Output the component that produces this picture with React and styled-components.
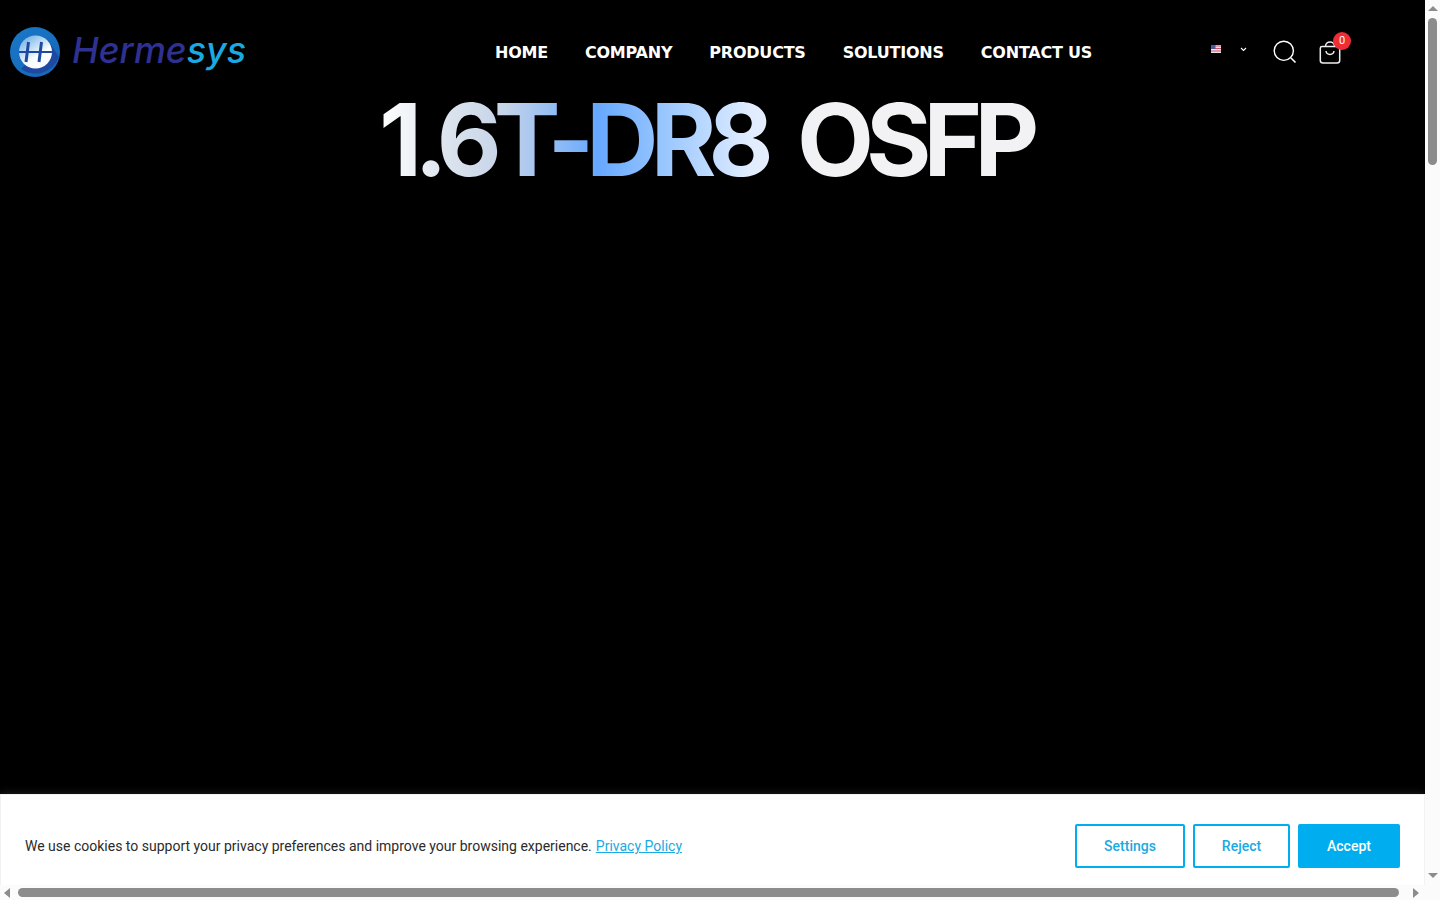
import React from 'react';
import styled, { createGlobalStyle } from 'styled-components';

const GlobalStyle = createGlobalStyle`
  html, body {
    margin: 0;
    height: 100%;
    overflow: hidden;
    background-color: #000;
    font-family: "DejaVu Sans", sans-serif;
  }
`;

const Shell = styled.div`
  display: grid;
  grid-template-columns: 1425px 15px;
  grid-template-rows: 885px 15px;
  width: 1440px;
  height: 900px;
  background-color: #fbfbfb;
`;

const Main = styled.main`
  position: relative;
  overflow: hidden;
  background-color: #000;
`;

const Header = styled.header`
  display: flex;
  align-items: center;
  height: 104px;
  padding: 0 84px 0 10px;
  box-sizing: border-box;
`;

const Logo = styled.a`
  display: flex;
  align-items: center;
  gap: 12px;
  width: 238px;
  flex-shrink: 0;
`;

const Nav = styled.nav`
  display: flex;
  gap: 37px;
  margin-left: 247px;
`;

const NavLink = styled.a`
  font-size: 16px;
  font-weight: 700;
  letter-spacing: -0.22px;
  color: #fff;
  white-space: nowrap;
`;

const Tools = styled.div`
  display: flex;
  align-items: center;
  margin-left: auto;
`;

const LangButton = styled.div`
  display: flex;
  align-items: center;
  gap: 19px;
  margin-right: 26px;
  margin-top: -6px;
`;

const IconButton = styled.div`
  position: relative;
  display: flex;
  margin-left: ${({ $gap }) => $gap || 0}px;
`;

const Badge = styled.span`
  position: absolute;
  top: -9px;
  right: -10px;
  width: 18px;
  height: 18px;
  border-radius: 50%;
  background-color: #ee2d35;
  color: #fff;
  font-family: Roboto, sans-serif;
  font-size: 11px;
  line-height: 18px;
  text-align: center;
`;

const Title = styled.h1`
  width: fit-content;
  margin: -16px 0 0 379px;
  padding-right: 10px;
  font-family: Inter, sans-serif;
  font-size: 100px;
  font-weight: 700;
  letter-spacing: -7.9px;
  word-spacing: 15.5px;
  line-height: 104px;
  white-space: pre;
  color: transparent;
  background: linear-gradient(90deg, #fff 0%, #dde4ee 10%, #c5d4e8 19%, #66a8ff 33%, #a8cfff 46%, #e0ecff 56%, #f2f2f4 66%, #f2f2f4 100%);
  background-clip: text;
  -webkit-background-clip: text;
`;

const CookieBar = styled.div`
  position: absolute;
  left: 0;
  right: 0;
  bottom: 0;
  display: flex;
  align-items: center;
  justify-content: space-between;
  padding: 29px 24px 17px;
  background-color: #fff;
  border: 1px solid #f2f2f2;
  border-bottom: none;
  box-shadow: 0 0 8px rgba(255, 255, 255, 0.15);
  font-family: Roboto, sans-serif;
`;

const CookieText = styled.p`
  margin: 0;
  font-size: 14px;
  color: #2b2b2b;
`;

const PolicyLink = styled.a`
  margin-left: 4px;
  color: #1ba9e1;
  text-decoration: underline;
`;

const CookieActions = styled.div`
  display: flex;
  gap: 8px;
`;

const CookieButton = styled.button`
  height: 44px;
  width: ${({ $width }) => $width}px;
  border: 2px solid #00aeef;
  border-radius: 2px;
  background-color: ${({ $primary }) => ($primary ? '#00aeef' : '#fff')};
  color: ${({ $primary }) => ($primary ? '#fff' : '#1ba9e1')};
  font-family: Roboto, sans-serif;
  font-size: 14px;
  font-weight: 500;
`;

const VerticalBar = styled.div`
  display: flex;
  flex-direction: column;
  align-items: center;
  padding: 6px 0 7px;
  box-sizing: border-box;
`;

const HorizontalBar = styled.div`
  display: flex;
  align-items: center;
  padding: 0 6px 0 4px;
`;

const VerticalThumb = styled.div`
  width: 9px;
  height: 147px;
  margin-top: 7px;
  margin-bottom: auto;
  border-radius: 5px;
  background-color: #8c8c8c;
`;

const HorizontalThumb = styled.div`
  width: 1381px;
  height: 9px;
  margin: 0 auto 0 8px;
  border-radius: 5px;
  background-color: #8c8c8c;
`;

const ArrowUp = styled.span`
  border-left: 5px solid transparent;
  border-right: 5px solid transparent;
  border-bottom: 5px solid #8c8c8c;
`;

const ArrowDown = styled.span`
  border-left: 5px solid transparent;
  border-right: 5px solid transparent;
  border-top: 5px solid #8c8c8c;
`;

const ArrowLeft = styled.span`
  border-top: 5px solid transparent;
  border-bottom: 5px solid transparent;
  border-right: 6px solid #8c8c8c;
`;

const ArrowRight = styled.span`
  border-top: 5px solid transparent;
  border-bottom: 5px solid transparent;
  border-left: 6px solid #8c8c8c;
`;

const LogoMark = () => (
  <svg width="50" height="50" viewBox="0 0 50 50">
    <defs>
      <clipPath id="disc">
        <circle cx="25.5" cy="25" r="16.5" />
      </clipPath>
      <linearGradient id="ring" x1="0" y1="0" x2="1" y2="1">
        <stop offset="0" stopColor="#1a78c8" />
        <stop offset="1" stopColor="#1565b8" />
      </linearGradient>
      <linearGradient id="face" x1="0.2" y1="0" x2="0.6" y2="0.6">
        <stop offset="0" stopColor="#6fb0e6" />
        <stop offset="1" stopColor="#fafdff" />
      </linearGradient>
    </defs>
    <circle cx="25" cy="25" r="25" fill="url(#ring)" />
    <path d="M11 42 L38 13 L49 30 A25 25 0 0 1 11 42 Z" fill="#1d4aa0" />
    <circle cx="25.5" cy="25" r="16.5" fill="url(#face)" />
    <g fill="none" clipPath="url(#disc)">
      <path d="M8 25 H43" stroke="#1d4aa0" strokeWidth="2" />
      <path d="M18.5 15 L16 35" stroke="#1d4aa0" strokeWidth="3" />
      <path d="M31.5 15 L29 35" stroke="#1d4aa0" strokeWidth="3" />
    </g>
  </svg>
);

const LogoWord = () => (
  <svg width="176" height="50" viewBox="0 0 176 50">
    <text
      x="0"
      y="36"
      fontFamily="Inter, sans-serif"
      fontSize="36"
      fontStyle="italic"
      fontWeight="500"
      fill="#2e3192"
      textLength="174"
      lengthAdjust="spacingAndGlyphs"
    >
      Herme<tspan fill="#1ba9e1">sys</tspan>
    </text>
  </svg>
);

const FlagIcon = () => (
  <svg width="10" height="8" viewBox="0 0 10 8">
    <rect width="10" height="8" fill="#e8e4ea" />
    <path d="M0 1H10M0 3.5H10M0 6H10" stroke="#d0546a" strokeWidth="1.1" />
    <rect width="4.5" height="4" fill="#4a5a9a" />
  </svg>
);

const ChevronIcon = () => (
  <svg width="7" height="5" viewBox="0 0 7 5">
    <path d="M1 1 L3.5 3.5 L6 1" fill="none" stroke="#fff" strokeWidth="1.1" />
  </svg>
);

const SearchIcon = () => (
  <svg width="24" height="24" viewBox="0 0 24 24">
    <circle cx="10.8" cy="10.8" r="9.6" fill="none" stroke="#fff" strokeWidth="1.4" />
    <path d="M18 18 L22.5 22.5" stroke="#fff" strokeWidth="1.6" />
  </svg>
);

const BagIcon = () => (
  <svg width="22" height="23" viewBox="0 0 22 23">
    <path
      d="M3 5.5 H19 Q20.7 5.5 20.7 7.2 V19.5 Q20.7 22 18 22 H4 Q1.3 22 1.3 19.5 V7.2 Q1.3 5.5 3 5.5 Z"
      fill="none"
      stroke="#eee"
      strokeWidth="1.5"
    />
    <path d="M6.5 5.5 C6.5 -0.5 15.5 -0.5 15.5 5.5" fill="none" stroke="#eee" strokeWidth="1.5" />
    <path d="M7 10 C7.5 14.5 14.5 14.5 15 10" fill="none" stroke="#eee" strokeWidth="1.5" />
  </svg>
);

const navItems = ['HOME', 'COMPANY', 'PRODUCTS', 'SOLUTIONS', 'CONTACT US'];

const App = () => {
  return (
    <>
      <GlobalStyle />
      <Shell>
        <Main>
          <Header>
            <Logo>
              <LogoMark />
              <LogoWord />
            </Logo>
            <Nav>
              {navItems.map((item) => (
                <NavLink key={item}>{item}</NavLink>
              ))}
            </Nav>
            <Tools>
              <LangButton>
                <FlagIcon />
                <ChevronIcon />
              </LangButton>
              <IconButton>
                <SearchIcon />
              </IconButton>
              <IconButton $gap={22}>
                <BagIcon />
                <Badge>0</Badge>
              </IconButton>
            </Tools>
          </Header>
          <Title>1.6T-DR8 OSFP</Title>
          <CookieBar>
            <CookieText>
              We use cookies to support your privacy preferences and improve your browsing experience.
              <PolicyLink href="#">Privacy Policy</PolicyLink>
            </CookieText>
            <CookieActions>
              <CookieButton $width={110}>Settings</CookieButton>
              <CookieButton $width={97}>Reject</CookieButton>
              <CookieButton $width={102} $primary>Accept</CookieButton>
            </CookieActions>
          </CookieBar>
        </Main>
        <VerticalBar>
          <ArrowUp />
          <VerticalThumb />
          <ArrowDown />
        </VerticalBar>
        <HorizontalBar>
          <ArrowLeft />
          <HorizontalThumb />
          <ArrowRight />
        </HorizontalBar>
      </Shell>
    </>
  );
};

export default App;
